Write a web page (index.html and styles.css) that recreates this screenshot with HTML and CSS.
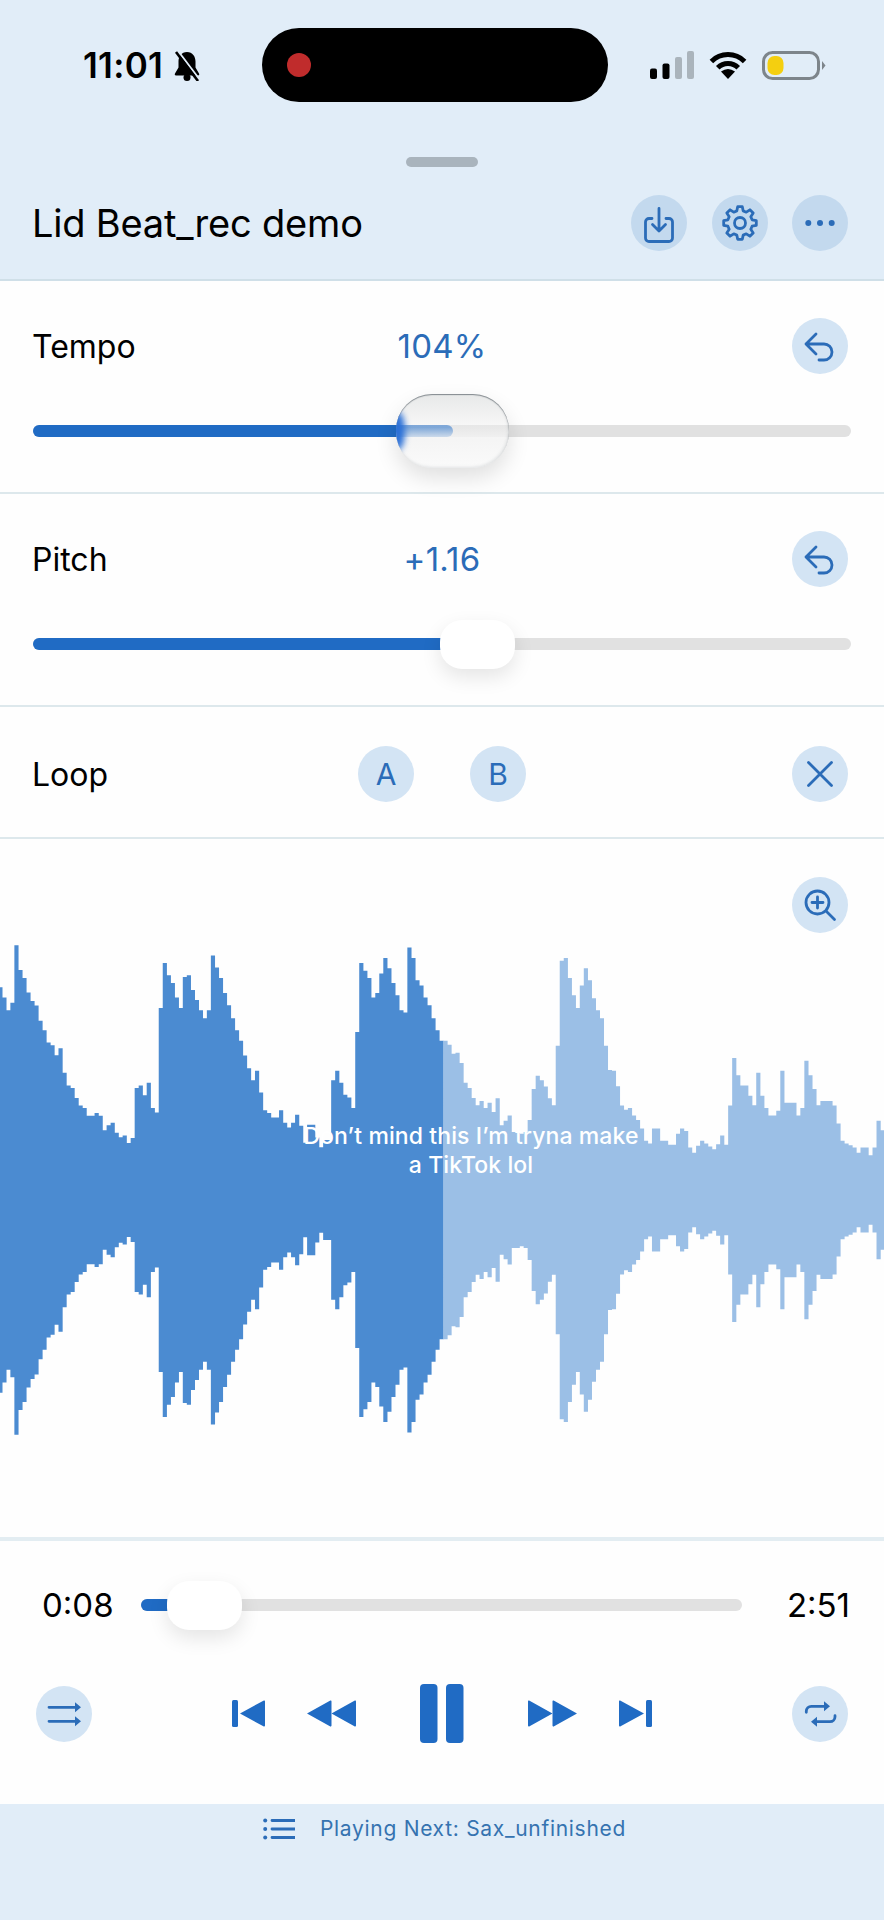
FILE: index.html
```html
<!DOCTYPE html>
<html>
<head>
    <title>Lid Beat_rec demo</title>
    <link rel="stylesheet" href="styles.css">
</head>
<body>
    <header class="top">
        <div class="status-bar">
            <div class="status-left">
                <span class="clock">11:01</span>
                <svg class="bell" width="28" height="30" viewBox="0 0 28 30">
                    <path d="M14 1c-5.500 0-8.500 4.500-8.500 9.500v6L2 22.500c-.6 1 0 2 1 2h22c1 0 1.600-1 1-2l-3.500-6v-6C22.500 5.500 19.500 1 14 1z" fill="#000"/>
                    <circle cx="14" cy="26.500" r="3.500" fill="#000"/>
                    <path d="M5 0l22 29" stroke="#e1edf8" stroke-width="2" fill="none"/>
                    <path d="M3 1l22 29" stroke="#000" stroke-width="2.600" fill="none"/>
                </svg>
            </div>
            <div class="island"><span class="rec-dot"></span></div>
            <div class="status-right">
                <svg width="44" height="28" viewBox="0 0 44 28">
                    <rect x="0" y="17.500" width="7" height="10.500" rx="2" fill="#000"/>
                    <rect x="12.500" y="12.500" width="7" height="15.500" rx="2" fill="#000"/>
                    <rect x="25" y="6" width="7" height="22" rx="2" fill="#aab4bc"/>
                    <rect x="37" y="0" width="7" height="28" rx="2" fill="#aab4bc"/>
                </svg>
                <svg width="38" height="28" viewBox="0 0 38 28">
                    <path d="M2.400 10.400a23.500 23.500 0 0 1 33.200 0" stroke="#000" stroke-width="5" fill="none"/>
                    <path d="M8.750 16.750a14.500 14.500 0 0 1 20.500 0" stroke="#000" stroke-width="5" fill="none"/>
                    <path d="M19 28l-7-7.500q7-5 14 0z" fill="#000"/>
                </svg>
                <svg width="64" height="29" viewBox="0 0 64 29">
                    <rect x="1.500" y="1.500" width="55" height="26" rx="9" fill="none" stroke="#7d858b" stroke-width="3"/>
                    <rect x="5.500" y="5" width="16" height="19" rx="7" fill="#f4cf10"/>
                    <path d="M60 10l3.500 4.500L60 19z" fill="#7d858b"/>
                </svg>
            </div>
        </div>
        <div class="handle"></div>
        <div class="title-row">
            <h1>Lid Beat_rec demo</h1>
            <div class="title-actions">
                <button class="round-btn dark">
                    <svg class="icon" viewBox="0 0 56 56">
                        <path d="M21 23.500h-3a3.500 3.500 0 0 0-3.500 3.500v16a3.500 3.500 0 0 0 3.500 3.500h20a3.500 3.500 0 0 0 3.500-3.500V27a3.500 3.500 0 0 0-3.500-3.500h-3"/>
                        <path d="M28 13.500V36M21.500 29.500L28 36l6.500-6.500"/>
                    </svg>
                </button>
                <button class="round-btn dark">
                    <svg class="icon" viewBox="0 0 56 56">
                        <polygon points="30.300,11.700 31.200,15.900 34.250,17.200 37.900,14.800 41.200,18.100 38.800,21.750 40.100,24.800 44.300,25.700 44.300,30.300 40.100,31.200 38.800,34.250 41.200,37.900 37.900,41.200 34.250,38.800 31.200,40.100 30.300,44.300 25.700,44.300 24.800,40.100 21.750,38.800 18.100,41.200 14.800,37.900 17.200,34.250 15.900,31.200 11.700,30.300 11.700,25.700 15.900,24.800 17.200,21.750 14.800,18.100 18.100,14.800 21.750,17.200 24.800,15.900 25.700,11.700"/>
                        <circle cx="28" cy="28" r="5.500"/>
                    </svg>
                </button>
                <button class="round-btn dark">
                    <svg class="icon solid" viewBox="0 0 56 56">
                        <circle cx="16.300" cy="28" r="3"/>
                        <circle cx="28" cy="28" r="3"/>
                        <circle cx="39.700" cy="28" r="3"/>
                    </svg>
                </button>
            </div>
        </div>
    </header>

    <section class="control">
        <div class="control-row">
            <span class="label">Tempo</span>
            <span class="value">104%</span>
            <button class="round-btn reset">
                <svg class="icon" viewBox="0 0 56 56"><path d="M24 16L14 26l10 10M14 26h18a8 8 0 0 1 0 16h-5"/></svg>
            </button>
        </div>
        <div class="slider">
            <div class="track">
                <div class="fill" style="width: 51.3%"></div>
                <div class="lens" style="left: 44.4%"></div>
            </div>
        </div>
    </section>

    <section class="control">
        <div class="control-row">
            <span class="label">Pitch</span>
            <span class="value">+1.16</span>
            <button class="round-btn reset">
                <svg class="icon" viewBox="0 0 56 56"><path d="M24 16L14 26l10 10M14 26h18a8 8 0 0 1 0 16h-5"/></svg>
            </button>
        </div>
        <div class="slider">
            <div class="track">
                <div class="fill" style="width: 51%"></div>
                <div class="thumb" style="left: 49.7%"></div>
            </div>
        </div>
    </section>

    <section class="loop">
        <div class="control-row">
            <span class="label">Loop</span>
            <div class="ab">
                <button class="round-btn letter">A</button>
                <button class="round-btn letter">B</button>
            </div>
            <button class="round-btn reset">
                <svg class="icon" viewBox="0 0 56 56"><path d="M16.500 16.500l23 23M39.500 16.500l-23 23"/></svg>
            </button>
        </div>
    </section>

    <section class="wave-panel">
        <button class="round-btn zoom-btn">
            <svg class="icon" viewBox="0 0 56 56">
                <circle cx="25.500" cy="25.500" r="11.500"/>
                <path d="M34 34l8.500 8.500M25.500 20v11M20 25.500h11"/>
            </svg>
        </button>
        <svg class="wave" id="wave" viewBox="0 0 2652 1566" preserveAspectRatio="none">
            <path id="wavePlayed" fill="#4b8bd1"/>
            <path id="waveRest" fill="#9bbfe6"/>
        </svg>
        <div class="caption">Don’t mind this I’m tryna make<br>a TikTok lol</div>
    </section>

    <section class="transport">
        <div class="time-row">
            <span class="time">0:08</span>
            <div class="track">
                <div class="fill" style="width: 6%"></div>
                <div class="thumb" style="left: 4.3%"></div>
            </div>
            <span class="time end">2:51</span>
        </div>
        <div class="controls">
            <button class="round-btn">
                <svg class="icon" viewBox="0 0 56 56">
                    <path d="M13 21.300h27M13 35.300h27"/>
                    <path class="head" d="M39 16.300l6 5-6 5zM39 30.300l6 5-6 5z"/>
                </svg>
            </button>
            <div class="player">
                <div class="skip-pair">
                    <svg width="33" height="27" viewBox="0 0 33 27">
                        <rect width="6" height="27" rx="1.500"/>
                        <path d="M33 1.500v24a1 1 0 0 1-1.600.8L8 13.500 31.400.7a1 1 0 0 1 1.600.8z"/>
                    </svg>
                    <svg width="49" height="27" viewBox="0 0 49 27">
                        <path d="M24.500 1.500v24a1 1 0 0 1-1.600.8L0 13.500 22.900.7a1 1 0 0 1 1.600.8z"/>
                        <path d="M49 1.500v24a1 1 0 0 1-1.600.8L24.500 13.500 47.400.7a1 1 0 0 1 1.600.8z"/>
                    </svg>
                </div>
                <svg width="44" height="59" viewBox="0 0 44 59">
                    <rect width="17.500" height="59" rx="4"/>
                    <rect x="26" width="17.500" height="59" rx="4"/>
                </svg>
                <div class="skip-pair">
                    <svg width="49" height="27" viewBox="0 0 49 27">
                        <path d="M0 1.500v24a1 1 0 0 0 1.600.8L24.500 13.500 1.600.7A1 1 0 0 0 0 1.500z"/>
                        <path d="M24.500 1.500v24a1 1 0 0 0 1.600.8L49 13.500 26.100.7a1 1 0 0 0-1.600.8z"/>
                    </svg>
                    <svg width="33" height="27" viewBox="0 0 33 27">
                        <rect x="27" width="6" height="27" rx="1.500"/>
                        <path d="M0 1.500v24a1 1 0 0 0 1.600.8L25 13.500 1.600.7A1 1 0 0 0 0 1.500z"/>
                    </svg>
                </div>
            </div>
            <button class="round-btn">
                <svg class="icon" viewBox="0 0 56 56">
                    <path d="M14.300 26.300v-1a5 5 0 0 1 5-5H33M43 29.700v1a5 5 0 0 1-5 5H24"/>
                    <path class="head" d="M32 15.300l6 5-6 5zM25 30.700l-6 5 6 5z"/>
                </svg>
            </button>
        </div>
    </section>

    <footer class="next">
        <svg class="icon list" width="32" height="22" viewBox="0 0 32 22">
            <path d="M9 2.500h23M9 11h23M9 19.500h23"/>
            <circle class="head" cx="2.200" cy="2.500" r="2"/>
            <circle class="head" cx="2.200" cy="11" r="2"/>
            <circle class="head" cx="2.200" cy="19.500" r="2"/>
        </svg>
        <span>Playing Next: Sax_unfinished</span>
    </footer>

    <script src="waveform.js"></script>
</body>
</html>
```
FILE: styles.css
```css
* {
    box-sizing: border-box;
}
body {
    margin: 0;
    width: 884px;
    height: 1920px;
    overflow: hidden;
    display: flex;
    flex-direction: column;
    font-family: Inter, "Liberation Sans", sans-serif;
    background-color: #e1edf8;
    color: #000;
}
button {
    font-family: inherit;
    padding: 0;
    border: none;
}

/* top area */
.top {
    height: 281px;
    border-bottom: 2px solid #cfdfe8;
}
.status-bar {
    display: flex;
    align-items: center;
    height: 74px;
    margin-top: 28px;
    padding-left: 83px;
}
.status-left {
    display: flex;
    align-items: center;
    gap: 10px;
    width: 179px;
}
.clock {
    font-size: 35px;
    font-weight: 600;
    letter-spacing: 0.3px;
}
.bell {
    margin-top: 2px;
}
.island {
    display: flex;
    align-items: center;
    width: 346px;
    height: 74px;
    padding-left: 25px;
    border-radius: 37px;
    background-color: #000;
}
.rec-dot {
    width: 24px;
    height: 24px;
    border-radius: 50%;
    background-color: #c02c2c;
}
.status-right {
    display: flex;
    align-items: center;
    gap: 15px;
    margin-left: 42px;
}
.handle {
    width: 72px;
    height: 10px;
    margin: 55px auto 0;
    border-radius: 5px;
    background-color: #a9b4bd;
}
.title-row {
    display: flex;
    align-items: center;
    justify-content: space-between;
    margin-top: 28px;
    padding: 0 36px 0 32px;
}
.title-row h1 {
    margin: 0;
    font-size: 38px;
    font-weight: 400;
    letter-spacing: -0.2px;
}
.title-actions {
    display: flex;
    gap: 24.5px;
}

/* round icon buttons */
.round-btn {
    flex: none;
    display: flex;
    align-items: center;
    justify-content: center;
    width: 56px;
    height: 56px;
    border-radius: 50%;
    background-color: #d3e4f4;
    color: #2b6cb8;
}
.round-btn.dark {
    background-color: #c3d9ee;
}
.round-btn.letter {
    font-size: 30px;
}
.icon {
    width: 56px;
    height: 56px;
    fill: none;
    stroke: #2b6cb8;
    stroke-width: 2.8;
    stroke-linecap: round;
    stroke-linejoin: round;
}
.icon.solid {
    fill: #2b6cb8;
    stroke: none;
}
.icon .head {
    fill: #2b6cb8;
    stroke: none;
}

/* tempo, pitch and loop rows */
.control,
.loop {
    padding: 37px 33px 0;
    background-color: #fefefe;
    border-bottom: 2px solid #dde8ec;
}
.control {
    height: 213px;
}
.loop {
    height: 132px;
    padding-top: 39px;
}
.control-row {
    display: grid;
    grid-template-columns: 1fr auto 1fr;
    align-items: center;
}
.control-row .round-btn.reset {
    justify-self: end;
    margin-right: 3px;
}
.label {
    margin-left: -1px;
    font-size: 32px;
}
.value {
    font-size: 33px;
    letter-spacing: 0.2px;
    color: #2b6cb8;
}
.ab {
    display: flex;
    gap: 56px;
}

/* sliders */
.slider {
    margin-top: 33px;
    height: 48px;
    display: flex;
    align-items: center;
}
.track {
    position: relative;
    width: 100%;
    height: 12px;
    border-radius: 6px;
    background-color: #e1e1e1;
}
.fill {
    height: 12px;
    border-radius: 6px;
    background-color: #206bc4;
}
.thumb {
    position: absolute;
    top: -18px;
    width: 75px;
    height: 49px;
    border-radius: 22px;
    background-color: #fff;
    box-shadow: 0 8px 20px rgba(0, 0, 0, 0.1);
}
.lens {
    position: absolute;
    top: -31px;
    width: 113px;
    height: 74px;
    overflow: hidden;
    border-radius: 36px;
    background: linear-gradient(180deg, rgba(222, 224, 224, 0.72), rgba(240, 240, 240, 0.45) 45%, rgba(244, 244, 244, 0.92) 62%, rgba(250, 250, 250, 0.92));
    box-shadow: inset 0 1px 1px rgba(50, 60, 70, 0.55), inset -1px -1px 3px rgba(170, 175, 180, 0.3), 0 10px 22px rgba(0, 0, 0, 0.12);
}
.lens::before {
    content: "";
    position: absolute;
    left: -5px;
    top: 18px;
    width: 14px;
    height: 38px;
    border-radius: 50%;
    background-color: #2a6fd6;
    filter: blur(3px);
}

/* waveform */
.wave-panel {
    position: relative;
    height: 702px;
    padding-top: 81px;
    background-color: #fefefe;
    border-bottom: 4px solid #e3edf2;
}
.zoom-btn {
    position: absolute;
    top: 38px;
    right: 36px;
}
.wave {
    display: block;
    width: 884px;
    height: 540px;
}
.caption {
    position: absolute;
    top: 283px;
    left: 271px;
    width: 400px;
    text-align: center;
    font-size: 23px;
    font-weight: 500;
    letter-spacing: 0.1px;
    line-height: 29px;
    color: #fff;
}

/* bottom player */
.transport {
    height: 263px;
    padding-top: 40px;
    background-color: #fefefe;
}
.time-row {
    display: grid;
    grid-template-columns: 99px 1fr 108px;
    align-items: center;
    height: 48px;
    padding: 0 34px 0 42px;
}
.time {
    font-size: 33px;
}
.time.end {
    text-align: right;
}
.controls {
    display: flex;
    align-items: center;
    justify-content: space-between;
    margin-top: 55px;
    padding: 0 36px;
}
.player {
    display: flex;
    align-items: center;
    gap: 64px;
    fill: #206bc4;
}
.skip-pair {
    display: flex;
    align-items: center;
    gap: 42px;
}

/* playing next */
.next {
    display: flex;
    align-items: center;
    justify-content: center;
    gap: 25px;
    padding: 12px 0 0 5px;
    font-size: 21px;
    letter-spacing: 0.7px;
    color: #3573b0;
}
.icon.list {
    width: 32px;
    height: 22px;
}
```
FILE: waveform.js
```js
// top edge of each bar in viewBox units, the lower edge is its mirror
const peaks = [
    195, 225, 262, 240, 73, 145, 168, 210, 235, 248, 292, 320, 355, 363, 392, 372,
    443, 480, 487, 516, 538, 545, 568, 568, 560, 568, 610, 595, 588, 617, 630, 625,
    647, 632, 487, 480, 508, 472, 545, 558, 255, 125, 160, 183, 225, 255, 165, 160,
    203, 232, 262, 285, 262, 103, 138, 168, 212, 247, 285, 320, 350, 393, 430, 465,
    437, 500, 552, 560, 573, 573, 552, 588, 602, 588, 565, 597, 646, 594, 594, 631,
    659, 638, 638, 465, 437, 472, 507, 515, 545, 325, 125, 147, 168, 225, 212,
    155, 110, 140, 183, 218, 262, 268, 80, 110, 175, 190, 225, 247, 285, 320, 350, 350,
    362, 388, 385, 415, 472, 487, 516, 537, 525, 545, 530, 557, 517, 595, 582, 567,
    615, 615, 620, 615, 580, 490, 452, 465, 483, 517, 537, 365, 118, 110, 168, 218,
    255, 190, 140, 175, 227, 262, 285, 365, 435, 437, 482, 538, 550, 545, 567, 580,
    605, 640, 648, 605, 605, 640, 640, 652, 652, 620, 605, 612, 660, 675, 655, 640,
    648, 657, 665, 650, 625, 652, 538, 400, 450, 480, 480, 510, 537, 443, 510, 545,
    567, 567, 553, 437, 530, 530, 530, 567, 545, 408, 450, 490, 537, 525, 525, 525,
    538, 590, 640, 648, 653, 660, 675, 660, 660, 682, 660, 582, 610, 617, 617, 617
];
const barWidth = 12.03;
const startX = -5;
const playedTo = 1326;
const height = 1566;

function drawWave() {
    let played = '';
    let rest = '';
    peaks.forEach((top, i) => {
        const x = startX + i * barWidth;
        const bar = `M${x} ${top}h${barWidth + 0.5}V${height - top}h${-(barWidth + 0.5)}z`;
        if (x < playedTo - 4) {
            played += bar;
        } else {
            rest += bar;
        }
    });
    document.getElementById('wavePlayed').setAttribute('d', played);
    document.getElementById('waveRest').setAttribute('d', rest);
}

drawWave();
```
